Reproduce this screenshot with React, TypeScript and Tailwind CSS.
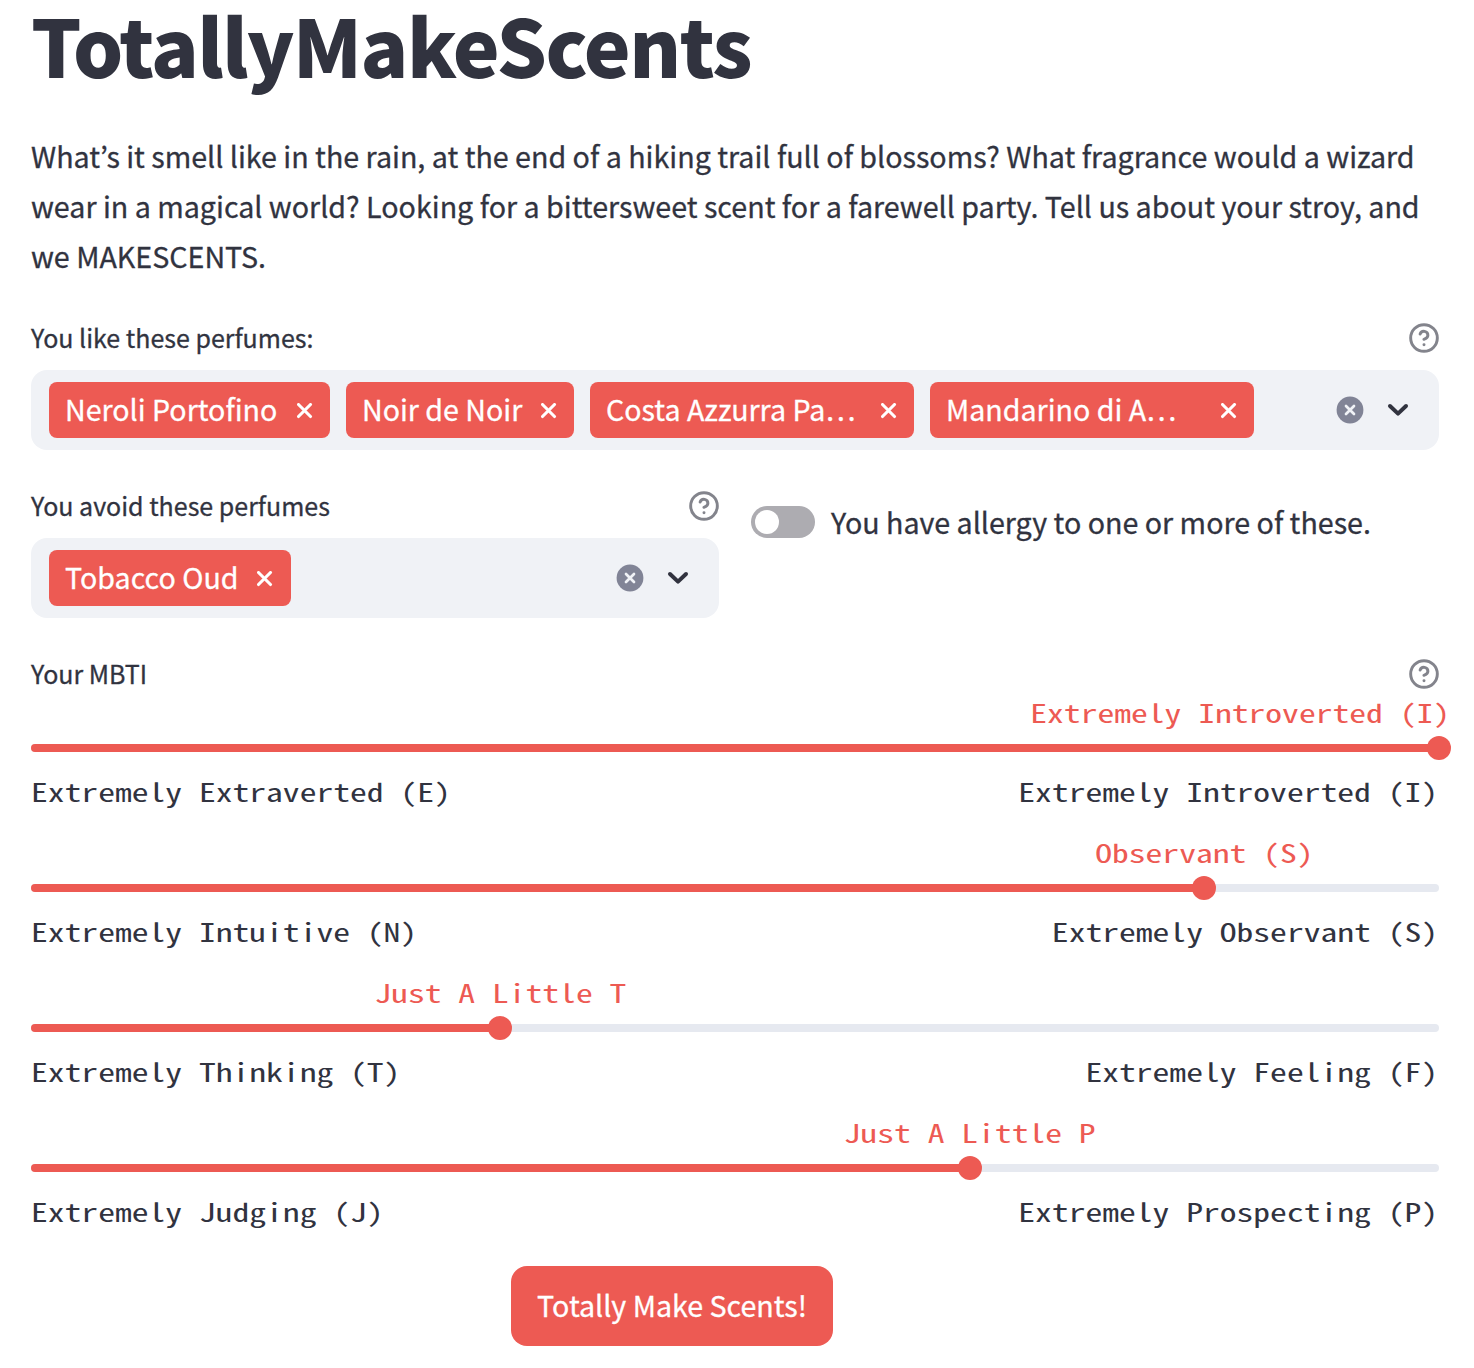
import React from "react";

const sans = "font-['Noto_Sans_CJK_KR','Noto_Sans',sans-serif] [-webkit-text-stroke:0.3px_currentColor]";
const mono = "font-['Noto_Sans_Mono_CJK_KR','DejaVu_Sans_Mono',monospace] [-webkit-text-stroke:0px]";

function HelpIcon() {
  return (
    <svg className="size-8 -mr-px shrink-0 text-[#83848c]" viewBox="0 0 24 24" fill="none" stroke="currentColor" strokeWidth="2.2" strokeLinecap="round" strokeLinejoin="round">
      <circle cx="12" cy="12" r="10" />
      <path d="M9.09 9a3 3 0 0 1 5.83 1c0 2-3 3-3 3" />
      <path d="M12 17h.01" />
    </svg>
  );
}

function Label({ text }: { text: string }) {
  return (
    <div className="flex h-8 items-center justify-between">
      <span className="pb-0.5 text-[25px] leading-8 whitespace-nowrap">{text}</span>
      <HelpIcon />
    </div>
  );
}

function Tag({ text, width }: { text: string; width: string }) {
  return (
    <div className={`flex h-14 items-center justify-between rounded-lg bg-[#ed5a53] pl-4 text-white ${width}`}>
      <span className="pb-0.5 text-[28.6px] leading-[54px] whitespace-nowrap">{text}</span>
      <svg className="mt-px size-4 shrink-0" viewBox="0 0 16 16" fill="none" stroke="currentColor" strokeWidth="3.1" strokeLinecap="round">
        <path d="M1.5 1.5l12 12M13.5 1.5l-12 12" />
      </svg>
    </div>
  );
}

function Select({ tags }: { tags: { text: string; width: string }[] }) {
  return (
    <div className="mt-4 flex h-20 items-center rounded-2xl bg-[#f0f2f6] pl-[18px] pr-[30px]">
      <div className="flex flex-1 gap-4">
        {tags.map((t) => (
          <Tag key={t.text} {...t} />
        ))}
      </div>
      <svg className="size-7 shrink-0" viewBox="0 0 28 28" fill="none">
        <circle cx="14" cy="14" r="13.4" fill="#818496" />
        <path d="M10 10l8 8M18 10l-8 8" stroke="#f0f2f6" strokeWidth="2.7" strokeLinecap="round" />
      </svg>
      <svg className="ml-[23px] size-[22px] shrink-0" viewBox="0 0 22 22" fill="none" stroke="#31333f" strokeWidth="4" strokeLinecap="round" strokeLinejoin="round">
        <path d="M3 7L11 14.6L19 7" />
      </svg>
    </div>
  );
}

function Slider({ value, percent, min, max, atEnd }: { value: string; percent: number; min: string; max: string; atEnd?: boolean }) {
  return (
    <div className={`h-[140px] ${mono} text-[33.6px]`}>
      <div className="relative h-10 leading-9 text-[#ed5a53]">
        {atEnd ? (
          <span className="absolute -right-[11px] scale-y-75 whitespace-nowrap">{value}</span>
        ) : (
          <span className="absolute -translate-x-1/2 scale-y-75 whitespace-nowrap" style={{ left: `${percent}%` }}>{value}</span>
        )}
      </div>
      <div className="flex h-7 items-center">
        <div className="relative h-2 w-full rounded-full bg-[#e6e9f0]">
          <div className="h-2 rounded-full bg-[#ed5a53]" style={{ width: `${percent}%` }} />
          <div className="absolute -top-2 size-6 -translate-x-1/2 rounded-full bg-[#ed5a53]" style={{ left: `${percent}%` }} />
        </div>
      </div>
      <div className="mr-px flex h-[58px] scale-y-75 items-center justify-between whitespace-nowrap">
        <span>{min}</span>
        <span>{max}</span>
      </div>
    </div>
  );
}

export default function App() {
  return (
    <main className={`h-[1368px] w-[1474px] overflow-hidden bg-white pl-[31px] pr-[35px] text-[#31333f] ${sans}`}>
      <h1 className="h-[131px] text-[79px] leading-[88px] font-black tracking-[-1.55px] whitespace-nowrap [-webkit-text-stroke:0px]">TotallyMakeScents</h1>
      <p className="mb-[41px] h-[150px] text-[28.65px] leading-[50px] whitespace-nowrap">
        What’s it smell like in the rain, at the end of a hiking trail full of blossoms? What fragrance would a wizard
        <br />
        wear in a magical world? Looking for a bittersweet scent for a farewell party. Tell us about your stroy, and
        <br />
        we MAKESCENTS.
      </p>
      <section>
        <Label text="You like these perfumes:" />
        <Select
          tags={[
            { text: "Neroli Portofino", width: "w-[281px] pr-[17px]" },
            { text: "Noir de Noir", width: "w-[228px] pr-[17px]" },
            { text: "Costa Azzurra Pa…", width: "w-[324px] pr-[17px]" },
            { text: "Mandarino di A…", width: "w-[324px] pr-[17px]" },
          ]}
        />
      </section>
      <div className="mt-10 flex gap-8">
        <section className="w-[688px]">
          <Label text="You avoid these perfumes" />
          <Select tags={[{ text: "Tobacco Oud", width: "w-[242px] pr-[18px]" }]} />
        </section>
        <div className="mt-4 flex h-8 items-center gap-4">
          <div className="flex h-8 w-16 items-center rounded-full bg-[#adacb1] px-1">
            <div className="size-6 rounded-full bg-white" />
          </div>
          <span className="text-[28.64px] leading-8 whitespace-nowrap">You have allergy to one or more of these.</span>
        </div>
      </div>
      <section className="mt-10">
        <Label text="Your MBTI" />
        <div className="mt-1">
          <Slider value="Extremely Introverted (I)" percent={100} min="Extremely Extraverted (E)" max="Extremely Introverted (I)" atEnd />
          <Slider value="Observant (S)" percent={83.333} min="Extremely Intuitive (N)" max="Extremely Observant (S)" />
          <Slider value="Just A Little T" percent={33.333} min="Extremely Thinking (T)" max="Extremely Feeling (F)" />
          <Slider value="Just A Little P" percent={66.667} min="Extremely Judging (J)" max="Extremely Prospecting (P)" />
        </div>
      </section>
      <button className="mt-3 ml-[480px] flex h-20 w-[322px] items-center justify-center rounded-2xl bg-[#ed5a53] pb-0.5 text-[28.64px] whitespace-nowrap text-white">
        Totally Make Scents!
      </button>
    </main>
  );
}
